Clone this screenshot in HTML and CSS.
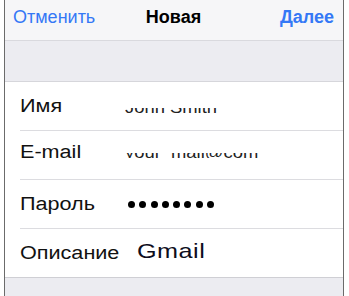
FILE: index.html
```html
<!DOCTYPE html>
<html lang="ru">
<head>
<meta charset="utf-8">
<title>Новая</title>
<link rel="stylesheet" href="styles.css">
</head>
<body>
<div class="frame">
  <header class="nav">
    <span class="nav-btn">Отменить</span>
    <span class="nav-title">Новая</span>
    <span class="nav-btn nav-btn-strong">Далее</span>
  </header>
  <div class="gap"></div>
  <div class="form">
    <div class="row">
      <span class="label"><span class="stretch">Имя</span></span>
      <div class="clip clip-name"><span class="clip-text">John Smith</span></div>
    </div>
    <div class="row">
      <span class="label label-raised"><span class="stretch">E-mail</span></span>
      <div class="clip"><span class="clip-text">your_mail@com</span></div>
    </div>
    <div class="row">
      <span class="label"><span class="stretch">Пароль</span></span>
      <div class="dots"><i></i><i></i><i></i><i></i><i></i><i></i><i></i><i></i></div>
    </div>
    <div class="row row-last">
      <span class="label"><span class="stretch">Описание</span></span>
      <span class="value-big"><span class="stretch">Gmail</span></span>
    </div>
  </div>
  <div class="footer"></div>
</div>
</body>
</html>
```
FILE: styles.css
```css
* { box-sizing: border-box; }
html, body { margin: 0; padding: 0; background: #fff; }
body { font-family: "Liberation Sans", Arial, sans-serif; }

.frame {
  margin-left: 4px;
  width: 340px;
  height: 296px;
  border-left: 1px solid #6b6b6b;
  border-right: 1px solid #6b6b6b;
  background: #ececf1;
  display: flex;
  flex-direction: column;
}

.nav {
  height: 41px;
  background: #f6f6f8;
  border-bottom: 1px solid #d9d9de;
  display: grid;
  grid-template-columns: 1fr auto 1fr;
  align-items: center;
  padding: 0 9px 5px 8px;
  font-size: 18px;
}
.nav-btn { color: #3478f6; }
.nav-btn-strong { font-weight: bold; justify-self: end; }
.nav-title { font-weight: bold; color: #000; }

.gap {
  height: 41px;
  border-bottom: 1px solid #d6d6db;
}

.form {
  background: #fff;
  padding-left: 15px;
  border-bottom: 1px solid #cfcfd4;
}
.row {
  height: 49px;
  display: flex;
  align-items: center;
  border-bottom: 1px solid #dcdce0;
  font-size: 18px;
  color: #111;
}
.row-last { border-bottom: none; height: 48px; }

.label {
  width: 105px;
  flex-shrink: 0;
}
.label-raised { margin-bottom: 5px; }

.stretch {
  display: inline-block;
  transform: scaleX(1.2);
  transform-origin: left center;
}

.clip {
  height: 5px;
  width: 200px;
  overflow: hidden;
}
.clip-name { margin-top: 9px; }
.clip-text {
  display: block;
  font-size: 16px;
  line-height: 0;
  padding-top: 0;
  color: #222;
  transform: scaleX(1.15);
  transform-origin: left center;
  white-space: nowrap;
}

.dots {
  display: flex;
  gap: 4.3px;
  margin-left: 3px;
  margin-top: 1px;
}
.dots i {
  width: 7px;
  height: 7px;
  border-radius: 50%;
  background: #000;
}

.value-big {
  margin-left: 12px;
  margin-bottom: 4px;
  font-size: 21px;
  letter-spacing: 0.4px;
  color: #0d0d1c;
}

.footer { flex: 1; }
```
